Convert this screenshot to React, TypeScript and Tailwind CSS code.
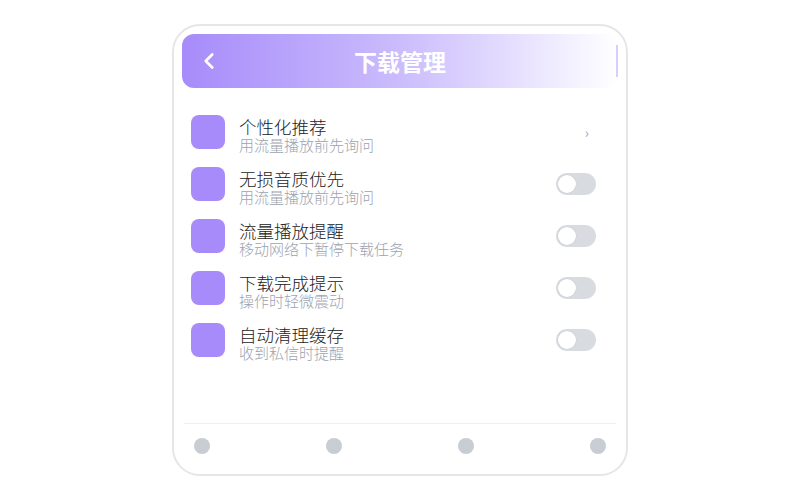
import { ChevronLeft } from "lucide-react"

const items = [
  { title: "个性化推荐", sub: "用流量播放前先询问", kind: "link" },
  { title: "无损音质优先", sub: "用流量播放前先询问", kind: "toggle" },
  { title: "流量播放提醒", sub: "移动网络下暂停下载任务", kind: "toggle" },
  { title: "下载完成提示", sub: "操作时轻微震动", kind: "toggle" },
  { title: "自动清理缓存", sub: "收到私信时提醒", kind: "toggle" },
]

function Toggle() {
  return (
    <div className="w-[40px] h-[22px] rounded-full bg-[#d8dbe0] p-[2px] flex items-center">
      <div className="w-[18px] h-[18px] rounded-full bg-white shadow-[0_0_0_0.5px_#c9ccd2]" />
    </div>
  )
}

export default function App() {
  return (
    <div
      className="w-[800px] h-[500px] bg-white flex items-center justify-center"
      style={{ fontFamily: '"Noto Sans CJK SC", "Noto Sans", sans-serif' }}
    >
      <div className="w-[456px] h-[452px] border-2 border-[#e6e6ea] rounded-[28px] px-[8px] pt-[8px] pb-[6px] flex flex-col">
        <header className="relative h-[54px] rounded-[12px] bg-gradient-to-r from-[#a78bfa] via-[#cbbcfc] to-white flex items-center justify-center">
          <ChevronLeft className="absolute left-[14px] w-[26px] h-[26px] text-white" strokeWidth={2.5} />
          <h1 className="text-white text-[23px] font-bold leading-none">下载管理</h1>
          <div className="absolute right-0 top-[11px] w-[2px] h-[32px] bg-[#d9cffd]" />
        </header>

        <div className="flex-1 pt-[27px] pl-[9px] pr-[22px] flex flex-col gap-[18px]">
          {items.map((it) => (
            <div key={it.title} className="flex items-center h-[34px]">
              <div className="w-[34px] h-[34px] rounded-[8px] bg-[#a78bfa] shrink-0" />
              <div className="ml-[14px] flex-1 self-start mt-[2px] flex flex-col">
                <span className="text-[17.5px] leading-[19px] text-[#222] font-light">{it.title}</span>
                <span className="text-[15px] leading-[18px] text-[#9ca3af] font-light">{it.sub}</span>
              </div>
              {it.kind === "link" ? (
                <span className="text-[#9ca3af] text-[14px] mr-[7px] leading-none">›</span>
              ) : (
                <Toggle />
              )}
            </div>
          ))}
        </div>

        <div className="mx-[2px] border-t border-[#eeeff2]" />
        <nav className="h-[44px] px-[12px] flex items-center justify-between">
          {[0, 1, 2, 3].map((i) => (
            <div key={i} className="w-[16px] h-[16px] rounded-full bg-[#c8ccd3]" />
          ))}
        </nav>
      </div>
    </div>
  )
}
